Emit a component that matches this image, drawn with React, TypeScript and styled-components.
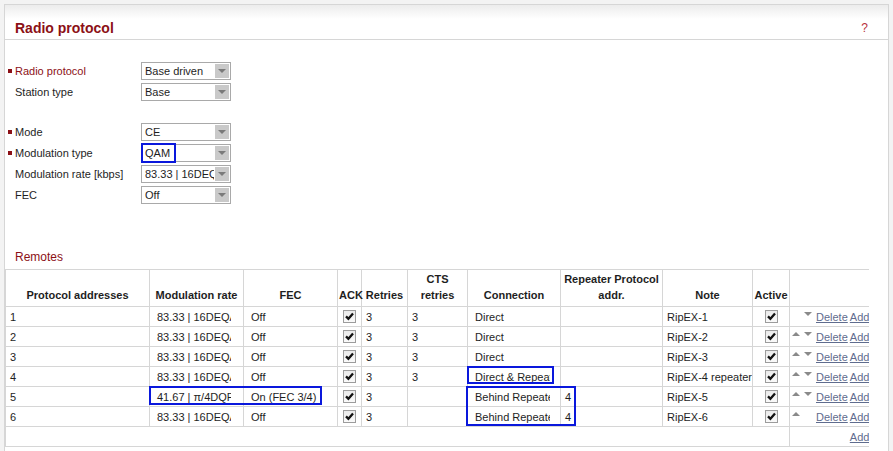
import React from "react";
import styled, { createGlobalStyle } from "styled-components";

const GlobalStyle = createGlobalStyle`
  html, body {
    margin: 0;
    padding: 0;
    background: #f3f3f3;
    font-family: "Liberation Sans", Arial, sans-serif;
    font-size: 11px;
    color: #1e1e1e;
  }
`;

type Remote = {
  addr: string;
  rate: string;
  fec: string;
  retries: string;
  cts: string;
  conn: string;
  rep: string;
  note: string;
  up: boolean;
  down: boolean;
};

const remotes: Remote[] = [
  { addr: "1", rate: "83.33 | 16DEQAM", fec: "Off", retries: "3", cts: "3", conn: "Direct", rep: "", note: "RipEX-1", up: false, down: true },
  { addr: "2", rate: "83.33 | 16DEQAM", fec: "Off", retries: "3", cts: "3", conn: "Direct", rep: "", note: "RipEX-2", up: true, down: true },
  { addr: "3", rate: "83.33 | 16DEQAM", fec: "Off", retries: "3", cts: "3", conn: "Direct", rep: "", note: "RipEX-3", up: true, down: true },
  { addr: "4", rate: "83.33 | 16DEQAM", fec: "Off", retries: "3", cts: "3", conn: "Direct & Repeater", rep: "", note: "RipEX-4 repeater", up: true, down: true },
  { addr: "5", rate: "41.67 | π/4DQPSK", fec: "On (FEC 3/4)", retries: "3", cts: "", conn: "Behind Repeater", rep: "4", note: "RipEX-5", up: true, down: true },
  { addr: "6", rate: "83.33 | 16DEQAM", fec: "Off", retries: "3", cts: "", conn: "Behind Repeater", rep: "4", note: "RipEX-6", up: true, down: false },
];

const cols = [144, 94, 94, 24, 46, 60, 93, 102, 90, 37, 90];

export default function App() {
  return (
    <>
      <GlobalStyle />
      <Page>
        <Panel>
          <PanelHeader>
            <Title>Radio protocol</Title>
            <Help>?</Help>
          </PanelHeader>

          <Form>
            <FormGroup>
              <Field label="Radio protocol" value="Base driven" marked />
              <Field label="Station type" value="Base" />
            </FormGroup>
            <FormGroup>
              <Field label="Mode" value="CE" marked />
              <Field label="Modulation type" value="QAM" marked changed />
              <Field label="Modulation rate [kbps]" value="83.33 | 16DEQAM" />
              <Field label="FEC" value="Off" />
            </FormGroup>
          </Form>

          <SectionTitle>Remotes</SectionTitle>

          <TableWrap>
            <Table>
              <colgroup>
                {cols.map((w, i) => (
                  <col key={i} style={{ width: w }} />
                ))}
              </colgroup>
              <thead>
                <tr>
                  <Th>Protocol addresses</Th>
                  <Th>Modulation rate</Th>
                  <Th>FEC</Th>
                  <Th>ACK</Th>
                  <Th>Retries</Th>
                  <Th>CTS<br />retries</Th>
                  <Th>Connection</Th>
                  <Th>Repeater Protocol addr.</Th>
                  <Th>Note</Th>
                  <Th>Active</Th>
                  <Th />
                </tr>
              </thead>
              <tbody>
                {remotes.map((r) => (
                  <tr key={r.addr}>
                    <Td>{r.addr}</Td>
                    <Td><CellSelect $w={77}>{r.rate}</CellSelect></Td>
                    <Td><CellSelect $w={80}>{r.fec}</CellSelect></Td>
                    <Td $center><Check /></Td>
                    <Td>{r.retries}</Td>
                    <Td>{r.cts}</Td>
                    <Td><CellSelect $w={78}>{r.conn}</CellSelect></Td>
                    <Td>{r.rep}</Td>
                    <Td>{r.note}</Td>
                    <Td $center><Check /></Td>
                    <Td>
                      <Actions>
                        <ArrowSlot>{r.up && <ArrowUp />}</ArrowSlot>
                        <ArrowSlot>{r.down && <ArrowDown />}</ArrowSlot>
                        <Link>Delete</Link>
                        <Link>Add</Link>
                      </Actions>
                    </Td>
                  </tr>
                ))}
                <tr>
                  <Td colSpan={10} />
                  <Td>
                    <Actions>
                      <ArrowSlot />
                      <ArrowSlot />
                      <Link $hidden>Delete</Link>
                      <Link>Add</Link>
                    </Actions>
                  </Td>
                </tr>
              </tbody>
            </Table>
            <Highlight style={{ left: 144, top: 117, width: 173, height: 19 }} />
            <Highlight style={{ left: 462, top: 97, width: 87, height: 18 }} />
            <Highlight style={{ left: 461, top: 117, width: 110, height: 40 }} />
          </TableWrap>
        </Panel>
      </Page>
    </>
  );
}

function Field({
  label,
  value,
  marked,
  changed,
}: {
  label: string;
  value: string;
  marked?: boolean;
  changed?: boolean;
}) {
  return (
    <FieldRow>
      <Bullet $on={!!marked} />
      <Label $red={label === "Radio protocol"}>{label}</Label>
      <Select>
        <SelectText>{value}</SelectText>
        <SelectArrow />
        {changed && <Highlight style={{ left: -1, top: -2, width: 35, height: 20 }} />}
      </Select>
    </FieldRow>
  );
}

function Check() {
  return (
    <CheckBox>
      <svg width="11" height="11" viewBox="0 0 11 11">
        <path d="M2 5.4 L4.4 7.8 L9 2.6" fill="none" stroke="#111" strokeWidth="2.3" />
      </svg>
    </CheckBox>
  );
}

const Page = styled.div`
  padding: 4px 0 0 4px;
  min-height: 100vh;
  box-sizing: border-box;
`;

const Panel = styled.div`
  width: 885px;
  min-height: calc(100vh - 4px);
  box-sizing: border-box;
  background: #fff;
  border: 1px solid #d6d6d6;
  border-bottom: none;
`;

const PanelHeader = styled.div`
  height: 35px;
  display: flex;
  align-items: center;
  justify-content: space-between;
  padding: 11px 20px 0 10px;
  background: linear-gradient(#ececec 0px, #fff 14px, #fff 100%);
  border-bottom: 1px solid #d6d6d6;
  box-sizing: border-box;
`;

const Title = styled.h1`
  margin: 0;
  font-size: 14px;
  font-weight: bold;
  color: #8c1016;
`;

const Help = styled.span`
  font-size: 12px;
  color: #b8323c;
`;

const Form = styled.div`
  padding-top: 22px;
  display: flex;
  flex-direction: column;
  gap: 22px;
`;

const FormGroup = styled.div`
  display: flex;
  flex-direction: column;
  gap: 3px;
`;

const FieldRow = styled.div`
  display: grid;
  grid-template-columns: 10px 126px 90px;
  align-items: center;
  height: 18px;
`;

const Bullet = styled.span<{ $on: boolean }>`
  width: 4px;
  height: 4px;
  margin-left: 3px;
  background: ${(p) => (p.$on ? "#8c1016" : "transparent")};
`;

const Label = styled.span<{ $red: boolean }>`
  color: ${(p) => (p.$red ? "#8c1016" : "#1e1e1e")};
  white-space: nowrap;
`;

const Select = styled.div`
  position: relative;
  height: 18px;
  border: 1px solid #a9a9a9;
  box-sizing: border-box;
  display: flex;
  align-items: center;
  background: #fff;
`;

const SelectText = styled.span`
  flex: 1;
  padding-left: 3px;
  overflow: hidden;
  white-space: nowrap;
`;

const SelectArrow = styled.span`
  width: 14px;
  height: 14px;
  margin: 1px;
  background: #c9c9c9;
  display: flex;
  align-items: center;
  justify-content: center;
  &::after {
    content: "";
    border-left: 4px solid transparent;
    border-right: 4px solid transparent;
    border-top: 4px solid #7a7a7a;
  }
`;

const SectionTitle = styled.div`
  margin: 44px 0 0 10px;
  height: 18px;
  line-height: 18px;
  font-size: 12px;
  color: #8c1016;
`;

const TableWrap = styled.div`
  position: relative;
  width: 864px;
  overflow: hidden;
  margin-top: 3px;
`;

const Table = styled.table`
  table-layout: fixed;
  width: 874px;
  border-collapse: collapse;
`;

const Th = styled.th`
  height: 33px;
  border: 1px solid #d6d6d6;
  padding: 0 1px 3px;
  vertical-align: bottom;
  text-align: center;
  font-weight: bold;
  line-height: 16px;
  color: #1e1e1e;
`;

const Td = styled.td<{ $center?: boolean }>`
  height: 19px;
  border: 1px solid #d6d6d6;
  padding: ${(p) => (p.$center ? "0" : "0 0 0 4px")};
  text-align: ${(p) => (p.$center ? "center" : "left")};
  white-space: nowrap;
  overflow: hidden;
  vertical-align: middle;
`;

const CellSelect = styled.span<{ $w: number }>`
  display: inline-block;
  width: ${(p) => p.$w}px;
  padding-left: 3px;
  box-sizing: border-box;
  overflow: hidden;
  white-space: nowrap;
  vertical-align: middle;
`;

const CheckBox = styled.span`
  display: inline-flex;
  align-items: center;
  justify-content: center;
  width: 13px;
  height: 13px;
  box-sizing: border-box;
  border: 1px solid #9c9c9c;
  background: linear-gradient(#eaeaea, #fafafa);
  vertical-align: middle;
`;

const Actions = styled.div`
  display: flex;
  align-items: center;
  margin-left: -2px;
`;

const ArrowSlot = styled.span`
  width: 12px;
  display: inline-flex;
  align-items: center;
  height: 10px;
`;

const ArrowUp = styled.span`
  border-left: 4px solid transparent;
  border-right: 4px solid transparent;
  border-bottom: 4px solid #8a8a8a;
  margin-top: -5px;
`;

const ArrowDown = styled.span`
  border-left: 4px solid transparent;
  border-right: 4px solid transparent;
  border-top: 4px solid #8a8a8a;
  margin-top: -5px;
`;

const Link = styled.span<{ $hidden?: boolean }>`
  color: #5f6c8e;
  text-decoration: underline;
  margin-right: 2px;
  visibility: ${(p) => (p.$hidden ? "hidden" : "visible")};
`;

const Highlight = styled.span`
  position: absolute;
  box-sizing: border-box;
  border: 2px solid #0a18dc;
  pointer-events: none;
`;
